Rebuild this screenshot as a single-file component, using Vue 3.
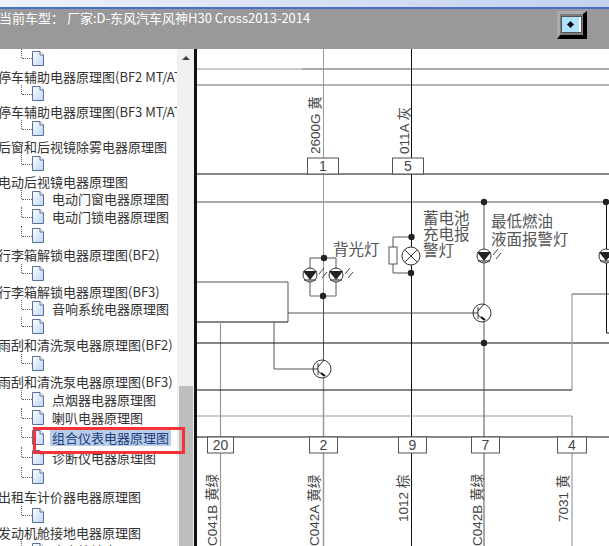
<template>
  <div class="page">
    <div class="title-strip"></div>
    <div class="toolbar">
      <span class="car-type">当前车型： 厂家:D-东风汽车风神H30 Cross2013-2014</span>
      <button class="toggle"><span class="toggle-face"><i class="diamond"></i></span></button>
    </div>

    <div class="main">
      <div class="tree">
        <div
          v-for="(row, i) in rows"
          :key="i"
          class="row"
          :class="{ leaf: row.icon, top: !row.icon }"
          :style="{ height: row.h + 'px' }"
        >
          <svg v-if="row.icon" class="file" width="12" height="15" viewBox="0 0 12 15">
            <path d="M.5.5H8L11.5 4V14.5H.5Z" fill="url(#paper)" stroke="#5a6f9c" />
            <path d="M8 .5V4H11.5" fill="#fff" stroke="#5a6f9c" />
            <defs>
              <linearGradient id="paper" x1="0" y1="0" x2="1" y2="1">
                <stop offset="0" stop-color="#ffffff" />
                <stop offset="1" stop-color="#bcd6f8" />
              </linearGradient>
            </defs>
          </svg>
          <span v-if="row.text" class="label" :class="{ selected: row.selected }">{{ row.text }}</span>
        </div>
      </div>

      <div class="scrollbar">
        <span class="arrow"></span>
        <div class="thumb"></div>
      </div>

      <div class="diagram">
        <svg width="412" height="497" viewBox="197 49 412 497">
          <line
            v-for="(l, i) in wires"
            :key="i"
            :x1="l[0]" :y1="l[1]" :x2="l[2]" :y2="l[3]"
            :stroke="l[4]"
            :stroke-width="l[5] || 1"
          />

          <g v-for="b in pins" :key="b.n">
            <rect :x="b.x" :y="b.y" :width="b.w" height="16" fill="#fff" stroke="#555" />
            <text class="pin" :x="b.x + b.w / 2" :y="b.y + 13">{{ b.n }}</text>
          </g>

          <circle v-for="(d, i) in dots" :key="'d' + i" :cx="d[0]" :cy="d[1]" r="3.2" fill="#222" />

          <g v-for="(p, i) in leds" :key="'l' + i" :transform="`translate(${p[0]} ${p[1]})`">
            <circle r="7" fill="#fff" stroke="#333" />
            <path d="M-7-4H7L0 5Z" fill="#222" />
            <path d="M-6 5H6" stroke="#222" />
            <path d="M9-1 14-7M12 3 17-3" stroke="#444" fill="none" />
          </g>

          <g v-for="(t, i) in transistors" :key="'t' + i" :transform="`translate(${t[0]} ${t[1]})`">
            <circle r="9" fill="#fff" stroke="#333" />
            <path d="M-9 0H-4M-4-6V6M-4-2 2-9M-4 2 2 7" stroke="#333" fill="none" />
            <path d="M-1 4 3 7" stroke="#111" stroke-width="2" />
          </g>

          <!-- 灯和电阻 -->
          <circle cx="411" cy="256" r="9" fill="#fff" stroke="#333" />
          <path d="M405 250 417 262M417 250 405 262" stroke="#333" />
          <rect x="389" y="247" width="8" height="17" fill="#fff" stroke="#555" />

          <text class="lamp" x="333" y="255">背光灯</text>
          <text class="lamp" x="423" y="224">蓄电池</text>
          <text class="lamp" x="423" y="240">充电报</text>
          <text class="lamp" x="423" y="256">警灯</text>
          <text class="lamp" x="491" y="227">最低燃油</text>
          <text class="lamp" x="491" y="245">液面报警灯</text>

          <text
            v-for="w in wireLabels"
            :key="w.t"
            class="wire-label"
            :transform="`translate(${w.x} ${w.y}) rotate(-90)`"
          >{{ w.t }}</text>
        </svg>
      </div>

      <div class="callout"></div>
    </div>
  </div>
</template>

<script setup>
const rows = [
  { h: 18, icon: true },
  { h: 18, text: '停车辅助电器原理图(BF2 MT/AT)' },
  { h: 17, icon: true },
  { h: 18, text: '停车辅助电器原理图(BF3 MT/AT)' },
  { h: 17, icon: true },
  { h: 18, text: '后窗和后视镜除雾电器原理图' },
  { h: 17, icon: true },
  { h: 18, text: '电动后视镜电器原理图' },
  { h: 17, icon: true, text: '电动门窗电器原理图' },
  { h: 19, icon: true, text: '电动门锁电器原理图' },
  { h: 19, icon: true },
  { h: 19, text: '行李箱解锁电器原理图(BF2)' },
  { h: 18, icon: true },
  { h: 18, text: '行李箱解锁电器原理图(BF3)' },
  { h: 17, icon: true, text: '音响系统电器原理图' },
  { h: 18, icon: true },
  { h: 19, text: '雨刮和清洗泵电器原理图(BF2)' },
  { h: 18, icon: true },
  { h: 18, text: '雨刮和清洗泵电器原理图(BF3)' },
  { h: 18, icon: true, text: '点烟器电器原理图' },
  { h: 19, icon: true, text: '喇叭电器原理图' },
  { h: 20, icon: true, text: '组合仪表电器原理图', selected: true },
  { h: 20, icon: true, text: '诊断仪电器原理图' },
  { h: 19, icon: true },
  { h: 20, text: '出租车计价器电器原理图' },
  { h: 18, icon: true },
  { h: 17, text: '发动机舱接地电器原理图' },
  { h: 18, icon: true, text: '底盘接地电器原理图' }
]

const gray = '#9a9a9a'
const dark = '#555'
const black = '#111'

// x1, y1, x2, y2, 颜色, 线宽
const wires = [
  [197, 69, 302, 69, gray],
  [302, 69, 609, 69, dark],
  [197, 85, 609, 85, gray, 1.5],
  [197, 174, 609, 174, black, 1.2],
  [197, 202, 609, 202, dark],
  [323.5, 49, 323.5, 296, gray],
  [411.5, 49, 411.5, 546, black, 1],
  [310, 258, 336, 258, dark],
  [310, 258, 310, 296, dark],
  [336, 258, 336, 296, dark],
  [310, 296, 336, 296, gray, 1.5],
  [323.5, 296, 323.5, 362, dark],
  [323.5, 376, 323.5, 546, gray, 1.5],
  [197, 282, 288, 282, dark],
  [288, 282, 288, 322, dark],
  [197, 322, 288, 322, black],
  [288, 313, 473, 313, dark],
  [274, 322, 274, 369, dark],
  [274, 369, 313, 369, dark],
  [220.5, 322, 220.5, 546, gray, 1.2],
  [197, 343, 609, 343, black],
  [197, 390, 572, 390, black],
  [197, 416, 572, 416, gray, 1.2],
  [572, 294, 572, 390, gray, 1.2],
  [572, 294, 609, 294, dark],
  [572, 416, 572, 546, gray, 1.2],
  [484, 202, 484, 546, dark],
  [606.5, 202, 606.5, 333, black],
  [606.5, 333, 609, 333, black],
  [393, 237, 411, 237, dark],
  [393, 237, 393, 247, dark],
  [393, 264, 393, 273, dark],
  [393, 273, 411, 273, dark],
  [197, 437, 609, 437, black, 1.2]
]

const pins = [
  { n: '1', x: 307.5, y: 158, w: 31 },
  { n: '5', x: 392.5, y: 158, w: 31 },
  { n: '20', x: 207.5, y: 437, w: 26 },
  { n: '2', x: 309.5, y: 437, w: 28 },
  { n: '9', x: 398.5, y: 437, w: 28 },
  { n: '7', x: 471.5, y: 437, w: 28 },
  { n: '4', x: 557.5, y: 437, w: 29 }
]

const dots = [
  [324, 258], [323, 296], [411.5, 237], [411, 273],
  [484, 202], [606, 202], [484, 343]
]

const leds = [[310, 275], [336, 275], [484, 256], [606, 256]]

const transistors = [[322, 369], [482, 313]]

const wireLabels = [
  { t: '2600G 黄', x: 320, y: 154 },
  { t: '011A 灰', x: 409, y: 154 },
  { t: 'C041B 黄绿', x: 217, y: 546 },
  { t: 'C042A 黄绿', x: 319, y: 546 },
  { t: '1012 棕', x: 408, y: 522 },
  { t: 'C042B 黄绿', x: 482, y: 546 },
  { t: '7031 黄', x: 568, y: 522 }
]
</script>

<style>
html,
body {
  margin: 0;
  overflow: hidden;
  background: #fff;
}
</style>

<style scoped>
.page {
  width: 609px;
  height: 546px;
  overflow: hidden;
  font-family: "Noto Sans CJK SC", "Noto Sans", sans-serif;
}

.title-strip {
  height: 7px;
  background: linear-gradient(90deg, #eef2fb, #c3d1ef);
  border-bottom: 2px solid #4a70c6;
}

.toolbar {
  height: 40px;
  background: #999;
  display: flex;
  justify-content: space-between;
  align-items: flex-start;
  padding-right: 22px;
  box-sizing: border-box;
}

.car-type {
  font-size: 13px;
  line-height: 17px;
  color: #fff;
  margin-left: -1px;
  white-space: pre;
}

.toggle {
  width: 30px;
  height: 28px;
  margin-top: 2px;
  padding: 0;
  background: #7c7c7c;
  border-style: solid;
  border-width: 3px 4px 4px 3px;
  border-color: #aaa #000 #000 #aaa;
  display: flex;
  align-items: center;
  justify-content: center;
}

.toggle-face {
  width: 17px;
  height: 15px;
  background: #aee2ff;
  border-right: 2px solid #fff;
  outline: 1px solid #555;
  display: flex;
  align-items: center;
  justify-content: center;
}

.diamond {
  width: 5px;
  height: 5px;
  background: #111;
  transform: rotate(45deg);
}

.main {
  display: flex;
  height: 497px;
  position: relative;
}

.tree {
  width: 177px;
  flex: none;
  overflow: hidden;
  background: #fff;
}

.row {
  position: relative;
  display: flex;
  align-items: center;
  white-space: nowrap;
  font-size: 13px;
  color: #333;
}

.row.top .label {
  margin-left: -2px;
}

.row.leaf::before {
  content: "";
  position: absolute;
  left: 21px;
  top: 0;
  height: 50%;
  border-left: 1px dotted #666;
}

.row.leaf::after {
  content: "";
  position: absolute;
  left: 22px;
  top: 50%;
  width: 10px;
  border-top: 1px dotted #666;
}

.file {
  margin-left: 32px;
  flex: none;
}

.file + .label {
  margin-left: 6px;
  padding: 0 2px;
}

.label.selected {
  background: #b9cde9;
  color: #1d3d7c;
  line-height: 17px;
}

/* 红框标注 */
.callout {
  position: absolute;
  left: 33px;
  top: 378px;
  width: 146px;
  height: 21px;
  border: 3px solid #f53238;
}

.scrollbar {
  width: 17px;
  flex: none;
  background: #f1f1f1;
  position: relative;
}

.arrow {
  position: absolute;
  left: 5px;
  top: 7px;
  border-left: 4px solid transparent;
  border-right: 4px solid transparent;
  border-bottom: 4px solid #444;
}

.thumb {
  position: absolute;
  left: 2px;
  right: 1px;
  top: 337px;
  bottom: 0;
  background: #bdbdbd;
}

.diagram {
  width: 412px;
  border-left: 3px solid #111;
  background: #fff;
}

.diagram svg {
  display: block;
}

.pin {
  font-family: "Liberation Sans", sans-serif;
  font-size: 14px;
  text-anchor: middle;
  fill: #444;
}

.lamp {
  font-family: "Noto Sans CJK SC", sans-serif;
  font-size: 15.5px;
  fill: #555;
}

.wire-label {
  font-family: "Liberation Sans", "Noto Sans CJK SC", sans-serif;
  font-size: 13.5px;
  fill: #444;
}
</style>
